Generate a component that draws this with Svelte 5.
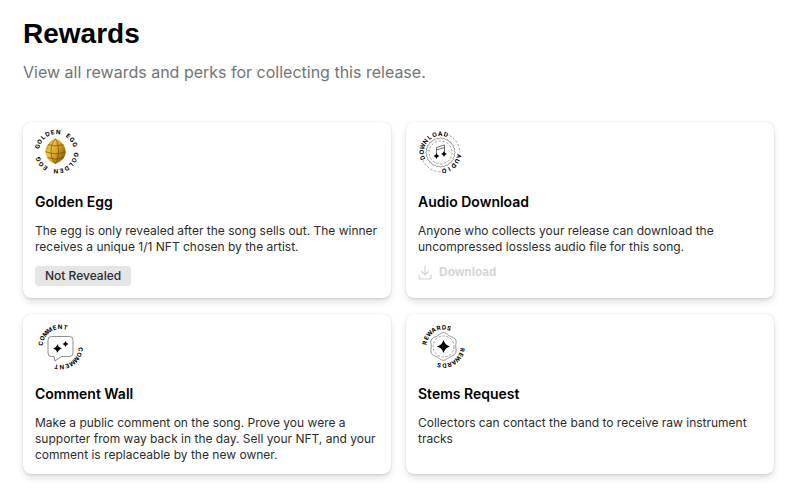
<script lang="ts">
	type Arc = { word: string; start: number; step: number };
	type Reward = {
		id: string;
		title: string;
		text: string;
		cx: number;
		cy: number;
		radius: number;
		arcs: Arc[];
	};

	const rewards: Reward[] = [
		{
			id: 'egg',
			title: 'Golden Egg',
			text: 'The egg is only revealed after the song sells out. The winner receives a unique 1/1 NFT chosen by the artist.',
			cx: 21.5,
			cy: 21.7,
			radius: 19.5,
			arcs: [
				{ word: 'GOLDEN EGG', start: -75, step: 16 },
				{ word: 'GOLDEN EGG', start: 99, step: 16.5 }
			]
		},
		{
			id: 'audio',
			title: 'Audio Download',
			text: 'Anyone who collects your release can download the uncompressed lossless audio file for this song.',
			cx: 22.5,
			cy: 22.5,
			radius: 18.6,
			arcs: [
				{ word: 'DOWNLOAD', start: -106, step: 17.5 },
				{ word: 'AUDIO', start: 101, step: 17 }
			]
		},
		{
			id: 'comment',
			title: 'Comment Wall',
			text: 'Make a public comment on the song. Prove you were a supporter from way back in the day. Sell your NFT, and your comment is replaceable by the new owner.',
			cx: 25.5,
			cy: 25,
			radius: 20,
			arcs: [
				{ word: 'COMMENT', start: -80, step: 15.7 },
				{ word: 'COMMENT', start: 97, step: 15.8 }
			]
		},
		{
			id: 'stems',
			title: 'Stems Request',
			text: 'Collectors can contact the band to receive raw instrument tracks',
			cx: 25.5,
			cy: 24.5,
			radius: 19,
			arcs: [
				{ word: 'REWARDS', start: -79, step: 16 },
				{ word: 'REWARDS', start: 100, step: 15.5 }
			]
		}
	];

	// wavy closed outline around the origin
	function scallop(radius: number, depth: number, lobes: number) {
		const points: string[] = [];
		for (let i = 0; i < 180; i++) {
			const a = (i / 180) * Math.PI * 2;
			const r = radius + depth * Math.cos(lobes * a);
			points.push(`${(r * Math.sin(a)).toFixed(2)} ${(-r * Math.cos(a)).toFixed(2)}`);
		}
		return `M${points.join('L')}Z`;
	}

	function sparkle(x: number, y: number, r: number) {
		const k = r * 0.22;
		return `M${x} ${y - r}Q${x + k} ${y - k} ${x + r} ${y}Q${x + k} ${y + k} ${x} ${y + r}Q${x - k} ${y + k} ${x - r} ${y}Q${x - k} ${y - k} ${x} ${y - r}Z`;
	}
</script>

<main>
	<header>
		<h1>Rewards</h1>
		<p>View all rewards and perks for collecting this release.</p>
	</header>

	<div class="grid">
		{#each rewards as reward (reward.id)}
			<article class="card">
				<svg class="seal" viewBox="0 0 48 48" aria-hidden="true">
					<g transform="translate({reward.cx} {reward.cy})">
						{#each reward.arcs as arc}
							{#each arc.word.split('') as letter, i}
								<text transform="rotate({arc.start + i * arc.step}) translate(0 {2 - reward.radius})">{letter}</text>
							{/each}
						{/each}

						{#if reward.id === 'egg'}
							<linearGradient id="gold" x1="0" y1="0" x2="1" y2="0.6">
								<stop offset="0" stop-color="#b98712" />
								<stop offset="0.35" stop-color="#edc443" />
								<stop offset="0.65" stop-color="#d29e1f" />
								<stop offset="1" stop-color="#8d620c" />
							</linearGradient>
							<path fill="url(#gold)" d="M-1 -13C4 -12 9 -6 9 -1C10 5 5 10 -1 12C-7 10 -11 6 -11 0C-11 -6 -6 -12 -1 -13Z" />
							<path class="seam" d="M-1 -13C-7 -6 -7 5 -1 12M-1 -13C3 -6 3 5 -1 12M-8.5 -7Q-1 -4.5 7 -7M-11 0Q-1 4 9 0M-9 6Q-1 9 7 6" />
						{:else if reward.id === 'audio'}
							<path class="line" d={scallop(14.2, 0.4, 24)} />
							<circle class="line dashed" r="11.5" />
							<path class="line dashed" d="M9 -17A19.3 19.3 0 0 1 19.3 0M0 19.3A19.3 19.3 0 0 1 -17.5 8" />
							<path class="line note" d="M-4 3V-5L4 -7.5V1.5M-4 -2.5L4 -5" />
							<path class="ink" d={sparkle(-4, 3.5, 3)} />
							<path class="ink" d={sparkle(3.5, 1.5, 3)} />
						{:else if reward.id === 'comment'}
							<path class="line" d="M-9 -10.5H9Q12.5 -10.5 12.5 -7V6Q12.5 9.5 9 9.5H1L-5.5 14L-6.5 9.5H-9Q-12.5 9.5 -12.5 6V-7Q-12.5 -10.5 -9 -10.5Z" />
							<path class="ink" d={sparkle(-3, 1.5, 4.3)} />
							<path class="ink" d={sparkle(5, -3, 3)} />
						{:else}
							<path class="line" d={scallop(13, 0.8, 6)} />
							<circle class="line dashed" r="10.5" />
							<path class="ink" d={sparkle(0, 0, 6.5)} />
						{/if}
					</g>
				</svg>

				<h2>{reward.title}</h2>
				<p>{reward.text}</p>

				{#if reward.id === 'egg'}
					<span class="badge">Not Revealed</span>
				{:else if reward.id === 'audio'}
					<button class="download" type="button" disabled>
						<svg viewBox="0 0 14 15" aria-hidden="true">
							<path d="M7 1V9.5M3.5 6.5L7 9.8L10.5 6.5M1 10V12Q1 14 3 14H11Q13 14 13 12V10" />
						</svg>
						Download
					</button>
				{/if}
			</article>
		{/each}
	</div>
</main>

<style>
	:global(body) {
		margin: 0;
		background: #fff;
	}

	main {
		padding: 16px 28px 28px 23px;
		font-family: Inter, 'Liberation Sans', sans-serif;
		color: #2c2c2c;
	}

	h1,
	h2,
	p {
		margin: 0;
	}

	h1 {
		font-family: 'Liberation Sans', Arial, sans-serif;
		font-size: 28px;
		line-height: 36px;
		font-weight: 700;
		color: #000;
	}

	header p {
		margin-top: 8px;
		font-size: 16px;
		line-height: 24px;
		color: #737373;
	}

	.grid {
		display: grid;
		grid-template-columns: 1fr 1fr;
		gap: 16px 15px;
		margin-top: 38px;
	}

	.card {
		display: flex;
		flex-direction: column;
		align-items: flex-start;
		padding: 8px 12px 11px;
		border-radius: 8px;
		background: #fff;
		box-shadow:
			0 0 1px rgba(0, 0, 0, 0.2),
			0 4px 8px -1px rgba(0, 0, 0, 0.14),
			0 2px 4px -2px rgba(0, 0, 0, 0.14);
	}

	.seal {
		width: 48px;
		height: 48px;
		overflow: visible;
	}

	.seal text {
		font-size: 6px;
		font-weight: 700;
		text-anchor: middle;
		fill: #000;
	}

	.line {
		fill: none;
		stroke: #444;
		stroke-width: 0.6;
	}

	.dashed {
		stroke-dasharray: 2.5 1.5;
		stroke-width: 0.5;
	}

	.note {
		stroke: #111;
	}

	.ink {
		fill: #000;
	}

	.seam {
		fill: none;
		stroke: #5f420a;
		stroke-width: 0.6;
	}

	h2 {
		margin-top: 12px;
		font-size: 14px;
		line-height: 24px;
		font-weight: 600;
		color: #000;
	}

	.card p {
		margin-top: 9px;
		font-size: 12px;
		line-height: 16px;
	}

	.badge {
		margin: 11px 0 1px;
		padding: 0 10px;
		border-radius: 4px;
		background: #e5e5e5;
		font-size: 12px;
		line-height: 20px;
		font-weight: 500;
	}

	.download {
		display: flex;
		align-items: center;
		gap: 7px;
		margin-top: 7px;
		padding: 0;
		border: none;
		background: none;
		font-family: 'Liberation Sans', Arial, sans-serif;
		font-size: 12px;
		line-height: 20px;
		font-weight: 700;
		color: #d4d4d4;
	}

	.download svg {
		width: 14px;
		height: 15px;
		fill: none;
		stroke: currentColor;
		stroke-width: 1.2;
		stroke-linecap: round;
		stroke-linejoin: round;
	}
</style>
